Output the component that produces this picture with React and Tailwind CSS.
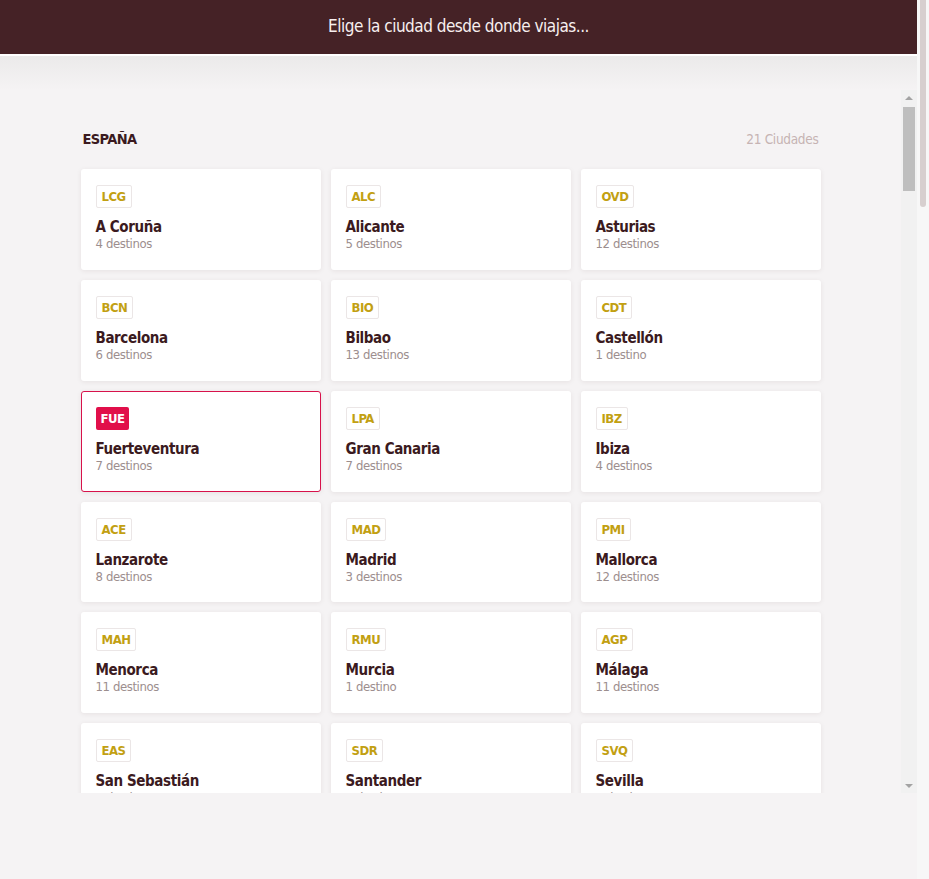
import React from 'react'

const cities = [
  { code: 'LCG', name: 'A Coruña', count: 4 },
  { code: 'ALC', name: 'Alicante', count: 5 },
  { code: 'OVD', name: 'Asturias', count: 12 },
  { code: 'BCN', name: 'Barcelona', count: 6 },
  { code: 'BIO', name: 'Bilbao', count: 13 },
  { code: 'CDT', name: 'Castellón', count: 1 },
  { code: 'FUE', name: 'Fuerteventura', count: 7 },
  { code: 'LPA', name: 'Gran Canaria', count: 7 },
  { code: 'IBZ', name: 'Ibiza', count: 4 },
  { code: 'ACE', name: 'Lanzarote', count: 8 },
  { code: 'MAD', name: 'Madrid', count: 3 },
  { code: 'PMI', name: 'Mallorca', count: 12 },
  { code: 'MAH', name: 'Menorca', count: 11 },
  { code: 'RMU', name: 'Murcia', count: 1 },
  { code: 'AGP', name: 'Málaga', count: 11 },
  { code: 'EAS', name: 'San Sebastián', count: 4 },
  { code: 'SDR', name: 'Santander', count: 2 },
  { code: 'SVQ', name: 'Sevilla', count: 4 },
  { code: 'TFN', name: 'Tenerife', count: 9 },
  { code: 'VLC', name: 'Valencia', count: 10 },
  { code: 'VGO', name: 'Vigo', count: 3 },
]

const font = "font-['DejaVu_Sans_Condensed','Liberation_Sans',sans-serif]"

const CityCard = ({ city, selected }) => (
  <div
    className={`h-[100.8px] rounded-[3px] bg-white shadow-[0_1px_5px_rgba(60,30,30,0.08)] ${
      selected ? 'border border-[#d7124b] px-[14px] pt-[14px]' : 'px-[15px] pt-[15px]'
    }`}
  >
    <span
      className={`inline-flex h-[23px] items-center rounded-[2px] px-[5px] text-[13px] font-bold leading-none tracking-[-0.5px] ${
        selected
          ? 'bg-[#e10f4a] text-white'
          : 'border border-[#ebe6e6] text-[#c2a012]'
      }`}
    >
      {city.code}
    </span>
    <div className="mt-[10px] text-[15px] font-bold leading-[18px] tracking-[-0.4px] text-[#3b1a20]">
      {city.name}
    </div>
    <div className="text-[13px] leading-[16px] tracking-[-0.4px] text-[#9c8e8e]">
      {city.count} {city.count === 1 ? 'destino' : 'destinos'}
    </div>
  </div>
)

const ScrollArrow = ({ down }) => (
  <div className="flex h-[15px] items-center justify-center">
    <div
      className={`h-0 w-0 border-x-[4px] border-x-transparent ${
        down ? 'border-t-[4px] border-t-[#a3a3a3]' : 'border-b-[4px] border-b-[#a3a3a3]'
      }`}
    />
  </div>
)

export default function App() {
  return (
    <div className={`flex h-[879px] w-[929px] overflow-hidden bg-[#f5f3f4] ${font}`}>
      <div className="flex w-[917px] flex-col">
        <header className="flex h-[54px] shrink-0 items-center justify-center bg-[#452226] text-[17px] tracking-[-0.5px] text-[#f7efef]">
          Elige la ciudad desde donde viajas...
        </header>
        <div className="h-[36px] shrink-0 border-t-2 border-white bg-gradient-to-b from-[#ebeaea] to-[#f5f3f4]" />

        <div className="flex h-[703px] shrink-0">
          <div className="flex-1 overflow-hidden">
            <div className="mx-auto w-[740px] pt-[39px]">
              <div className="flex items-center justify-between px-[2px]">
                <h2 className="text-[14.5px] font-bold leading-[20px] tracking-[-0.6px] text-[#3b1a20]">ESPAÑA</h2>
                <span className="text-[13.5px] tracking-[-0.3px] text-[#c6b3b3]">21 Ciudades</span>
              </div>
              <div className="mt-[20px] grid grid-cols-3 gap-[10px]">
                {cities.map((city) => (
                  <CityCard key={city.code} city={city} selected={city.code === 'FUE'} />
                ))}
              </div>
            </div>
          </div>

          {/* inner scrollbar */}
          <div className="flex w-[16px] flex-col bg-[#f1f1f1]">
            <ScrollArrow />
            <div className="mx-auto mt-[2px] h-[84px] w-[12px] bg-[#bebebe]" />
            <div className="flex-1" />
            <ScrollArrow down />
          </div>
        </div>
      </div>

      {/* page scrollbar */}
      <div className="w-[12px] bg-[#f7f7f7] pl-[3px]">
        <div className="h-[207px] w-[6px] rounded-b-[3px] bg-[#d7cfcf]" />
      </div>
    </div>
  )
}
